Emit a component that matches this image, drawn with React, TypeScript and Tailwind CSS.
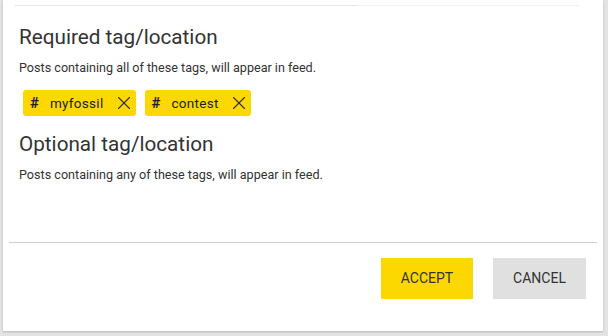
import { X } from 'lucide-react'

function Chip({ label }: { label: string }) {
  return (
    <div className="flex items-center h-[26px] rounded-[3px] bg-[#fcd800] pl-[7px] pr-[1px] text-[13.5px] text-[#222]">
      <span className="font-bold text-[15px] leading-none mr-[11px]">#</span>
      <span className="tracking-[0.3px]">{label}</span>
      <X className="ml-[9px] w-[22px] h-[22px] text-[#333]" strokeWidth={1.2} />
    </div>
  )
}

export default function App() {
  return (
    <div className="w-[608px] h-[336px] bg-[#e3e3e3] overflow-hidden" style={{ fontFamily: 'Roboto, "Open Sans", sans-serif' }}>
      <div className="ml-[3px] w-[600px] h-[331px] bg-white shadow-[0_1px_2px_rgba(0,0,0,0.2)] flex flex-col">
        <div className="pt-[5px] px-[12px] flex">
          <div className="h-px w-[342px] bg-[#e6e6e6]" />
          <div className="h-px flex-1 bg-[#f2f2f2] mr-[12px]" />
        </div>

        <div className="pl-[16px] pt-[19px]">
          <h2 className="text-[20.7px] leading-[24px] text-[#333]">Required tag/location</h2>
          <p className="mt-[11px] text-[12.6px] leading-[16px] text-[#333]">Posts containing all of these tags, will appear in feed.</p>
          <div className="flex gap-[9px] mt-[14px] ml-[4px]">
            <Chip label="myfossil" />
            <Chip label="contest" />
          </div>
          <h2 className="mt-[16px] text-[20.7px] leading-[24px] text-[#333]">Optional tag/location</h2>
          <p className="mt-[11px] text-[12.6px] leading-[16px] text-[#333]">Posts containing any of these tags, will appear in feed.</p>
        </div>

        <div className="mt-[59px] mx-[6px] h-px bg-[#cfcfcf]" />

        <div className="flex justify-end gap-[20px] pr-[17px] pt-[15px]">
          <button className="w-[92px] h-[41px] bg-[#fcd800] text-[14px] text-[#333] uppercase">Accept</button>
          <button className="w-[93px] h-[41px] bg-[#e0e0e0] text-[14px] text-[#333] uppercase">Cancel</button>
        </div>
      </div>
    </div>
  )
}
